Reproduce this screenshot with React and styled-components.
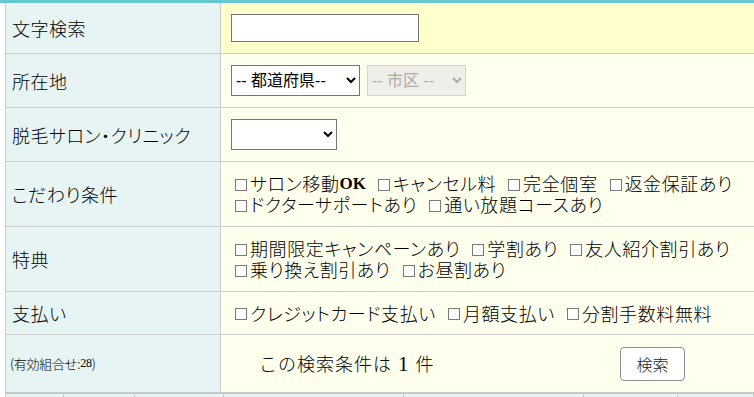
import React from "react";
import styled, { createGlobalStyle } from "styled-components";

const GlobalStyle = createGlobalStyle`
  body {
    margin: 0;
    background: #fff;
    font-family: "Liberation Serif", "Noto Sans CJK JP", serif;
    color: #000;
  }
`;

const Page = styled.div`
  border-top: 3px solid #66c8cc;
  padding-left: 5px;
  overflow: hidden;
`;

const Table = styled.div`
  border-left: 1px solid #ccc;
  border-bottom: 2px solid #c8c8c8;
  display: grid;
  grid-template-columns: 215px 1fr;
`;

const Label = styled.div`
  background: #e6f4f4;
  border-right: 1px solid #ccc;
  border-bottom: ${(p) => (p.last ? "none" : "1px solid #ccc")};
  height: ${(p) => p.h}px;
  display: flex;
  align-items: center;
  padding-left: ${(p) => (p.small ? 4 : 6)}px;
  font-family: "Noto Sans CJK JP", sans-serif;
  font-weight: 300;
  font-size: ${(p) => (p.small ? "13px" : "18px")};
  font-feature-settings: ${(p) => (p.small ? "normal" : '"palt"')};
  letter-spacing: ${(p) => (p.small ? "-0.3px" : "0.5px")};
  box-sizing: border-box;
`;

const Value = styled.div`
  background: ${(p) => (p.top ? "#ffffcc" : "#ffffee")};
  border-bottom: ${(p) => (p.last ? "none" : "1px solid #ccc")};
  height: ${(p) => p.h}px;
  display: flex;
  align-items: center;
  gap: 7px;
  padding-left: ${(p) => p.pad ?? 10}px;
  box-sizing: border-box;
`;

const TextInput = styled.input`
  width: 188px;
  height: 28px;
  box-sizing: border-box;
  border: 1px solid #767676;
  background: #fff;
  margin: 0;
`;

const Select = styled.select`
  width: ${(p) => p.w}px;
  height: 31px;
  box-sizing: border-box;
  margin: 0;
  font-family: "Liberation Sans", "Noto Sans CJK JP", sans-serif;
  font-size: 16px;
  color: ${(p) => (p.disabled ? "#8a8a8a" : "#000")};
  background: ${(p) => (p.disabled ? "#e9e9e9" : "#fff")};
  border: 1px solid ${(p) => (p.disabled ? "#c4c4c4" : "#767676")};
  border-radius: 0;
`;

const Lines = styled.div`
  display: flex;
  flex-direction: column;
`;

const Line = styled.div`
  display: flex;
  align-items: center;
  height: 21px;
  font-size: 18px;
  line-height: 21px;
  white-space: nowrap;
`;

const Item = styled.label`
  display: inline-flex;
  align-items: center;
  margin-right: 12px;
  font-family: "Noto Sans CJK JP", sans-serif;
  font-weight: 300;
  font-feature-settings: "palt";
  letter-spacing: 0.6px;
`;

const Box = styled.span`
  width: 10px;
  height: 10px;
  border: 1px solid #7a7a7a;
  background: #fff;
  margin: 2px 3px 0 0;
  flex: none;
`;

const Latin = styled.span`
  font-family: "Liberation Serif", serif;
  font-weight: bold;
  font-size: 17px;
  letter-spacing: 0;
`;

const SmallNum = styled.span`
  font-family: "Liberation Serif", serif;
  font-size: 12px;
`;

const Count = styled.div`
  font-size: 18px;
  font-family: "Noto Sans CJK JP", sans-serif;
  font-weight: 300;
  letter-spacing: 1px;
  margin-left: 28px;
  flex: 1;
  span {
    font-family: "Liberation Serif", serif;
    font-size: 21px;
    margin: 0 6px;
  }
`;

const Button = styled.button`
  width: 65px;
  height: 34px;
  margin-right: 69px;
  background: #fff;
  border: 1px solid #8f8f8f;
  border-radius: 4px;
  font-family: "Noto Sans CJK JP", sans-serif;
  font-weight: 300;
  font-size: 16px;
  color: #222;
  padding: 0;
`;

const NextRow = styled.div`
  display: grid;
  grid-template-columns: 58px 71px 89px 180px 180px 94px 1fr;
  border-left: 1px solid #ccc;
  height: 20px;
`;

const NextCell = styled.div`
  background: #e6f4f4;
  border-right: 1px solid #ccc;
`;

function Check({ children }) {
  return (
    <Item>
      <Box />
      {children}
    </Item>
  );
}

const kodawari = [
  [
    <>
      サロン移動<Latin>OK</Latin>
    </>,
    "キャンセル料",
    "完全個室",
    "返金保証あり",
  ],
  ["ドクターサポートあり", "通い放題コースあり"],
];

const tokuten = [
  ["期間限定キャンペーンあり", "学割あり", "友人紹介割引あり"],
  ["乗り換え割引あり", "お昼割あり"],
];

const shiharai = [["クレジットカード支払い", "月額支払い", "分割手数料無料"]];

function CheckLines({ lines }) {
  return (
    <Lines>
      {lines.map((line, i) => (
        <Line key={i}>
          {line.map((c, j) => (
            <Check key={j}>{c}</Check>
          ))}
        </Line>
      ))}
    </Lines>
  );
}

export default function App() {
  return (
    <>
      <GlobalStyle />
      <Page>
        <Table>
          <Label h={51}>文字検索</Label>
          <Value h={51} top>
            <TextInput type="text" />
          </Value>

          <Label h={54}>所在地</Label>
          <Value h={54}>
            <Select w={129} defaultValue="">
              <option value="">-- 都道府県--</option>
            </Select>
            <Select w={99} disabled defaultValue="">
              <option value="">-- 市区 --</option>
            </Select>
          </Value>

          <Label h={54}>脱毛サロン・クリニック</Label>
          <Value h={54}>
            <Select w={106} defaultValue="">
              <option value=""></option>
            </Select>
          </Value>

          <Label h={65}>こだわり条件</Label>
          <Value h={65} pad={14}>
            <CheckLines lines={kodawari} />
          </Value>

          <Label h={65}>特典</Label>
          <Value h={65} pad={14}>
            <CheckLines lines={tokuten} />
          </Value>

          <Label h={43}>支払い</Label>
          <Value h={43} pad={14}>
            <CheckLines lines={shiharai} />
          </Value>

          <Label h={57} small last>
            (有効組合せ:<SmallNum>28</SmallNum>)
          </Label>
          <Value h={57} last>
            <Count>
              この検索条件は<span>1</span>件
            </Count>
            <Button type="button">検索</Button>
          </Value>
        </Table>
        <NextRow>
          {Array.from({ length: 7 }).map((_, i) => (
            <NextCell key={i} />
          ))}
        </NextRow>
      </Page>
    </>
  );
}
